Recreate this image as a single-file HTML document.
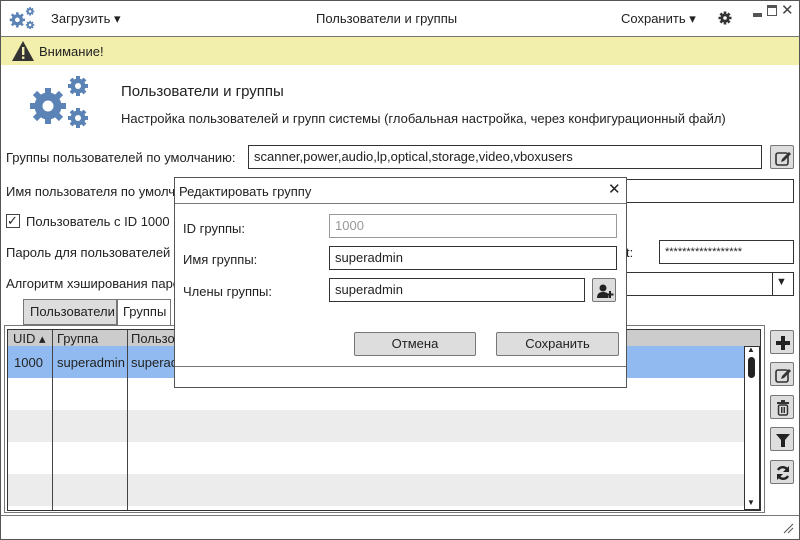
<!DOCTYPE html>
<html><head><meta charset="utf-8"><style>
*{box-sizing:border-box;margin:0;padding:0}
body{width:800px;height:540px;background:#fff;font-family:"Liberation Sans","DejaVu Sans",sans-serif;font-size:13px;color:#222;position:relative;overflow:hidden}
.a{position:absolute}
.win{left:0;top:0;width:800px;height:540px;border:1px solid #555}
.inp{position:absolute;border:1px solid #333;background:#fff;padding-left:5px;line-height:22px;font-size:13px}
.btn{position:absolute;border:1px solid #777;background:#ddd;border-radius:2px;text-align:center}
.ib{position:absolute;width:24px;height:24px;border:1px solid #777;background:#ddd;border-radius:2px}
.ib svg{position:absolute;left:3px;top:3px}
</style></head><body>
<svg width="0" height="0" style="position:absolute"><defs>
<g id="gears"><g fill="#5b83b5" stroke="#5b83b5"><circle cx="22" cy="32" r="13"/><g stroke-width="6"><path d="M22 14v36M4 32h36M9 19l26 26M35 19L9 45"/></g><circle cx="52" cy="12" r="7"/><path d="M52 2v20M42 12h20M45 5l14 14M59 5L45 19" stroke-width="4"/><circle cx="52" cy="44" r="7"/><path d="M52 34v20M42 44h20M45 37l14 14M59 37L45 51" stroke-width="4"/></g><g fill="#fff"><circle cx="22" cy="32" r="5.5"/><circle cx="52" cy="12" r="3"/><circle cx="52" cy="44" r="3"/></g></g>
<g id="edit"><rect x="2" y="4" width="12" height="12" rx="2" fill="none" stroke="#333" stroke-width="1.6"/><path d="M7 13l1-3 7-7 2 2-7 7z" fill="#333"/></g>
</defs></svg>
<div class="a win"></div>
<!-- title bar -->
<svg class="a" style="left:8px;top:6px" width="28" height="26" viewBox="0 0 66 60"><use href="#gears"/></svg>
<div class="a" style="left:51px;top:11px">Загрузить ▾</div>
<div class="a" style="left:316px;top:11px">Пользователи и группы</div>
<div class="a" style="left:621px;top:11px">Сохранить ▾</div>
<svg class="a" style="left:718px;top:11px" width="14" height="14" viewBox="0 0 14 14"><circle cx="7" cy="7" r="4.5" fill="#333"/><path d="M7 0.5v13M0.5 7h13M2.4 2.4l9.2 9.2M11.6 2.4l-9.2 9.2" stroke="#333" stroke-width="2.6"/><circle cx="7" cy="7" r="1.8" fill="#fff"/></svg>
<div class="a" style="left:753px;top:13px;width:9px;height:4px;background:#555"></div>
<div class="a" style="left:767px;top:5px;width:10px;height:11px;border:1.5px solid #555;border-top-width:3px"></div>
<div class="a" style="left:781px;top:1px;font-size:15px;color:#444">✕</div>
<div class="a" style="left:1px;top:36px;width:798px;height:1px;background:#777"></div>
<div class="a" style="left:1px;top:37px;width:798px;height:28px;background:#f2eeab"></div>
<svg class="a" style="left:11px;top:40px" width="24" height="22"><path d="M12 1 L23 21 L1 21 Z" fill="#333"/><rect x="11" y="7" width="2.4" height="8" fill="#f2eeab"/><rect x="11" y="16.5" width="2.4" height="2.4" fill="#f2eeab"/></svg>
<div class="a" style="left:39px;top:44px">Внимание!</div>
<!-- header -->
<svg class="a" style="left:26px;top:74px" width="66" height="60" viewBox="0 0 66 60"><use href="#gears"/></svg>
<div class="a" style="left:121px;top:83px;font-size:15px">Пользователи и группы</div>
<div class="a" style="left:121px;top:111px">Настройка пользователей и групп системы (глобальная настройка, через конфигурационный файл)</div>
<!-- fields -->
<div class="a" style="left:6px;top:150px">Группы пользователей по умолчанию:</div>
<div class="inp" style="left:248px;top:145px;width:514px;height:24px">scanner,power,audio,lp,optical,storage,video,vboxusers</div>
<div class="ib" style="left:770px;top:145px"><svg width="18" height="18"><use href="#edit"/></svg></div>
<div class="a" style="left:6px;top:184px">Имя пользователя по умолчанию</div>
<div class="inp" style="left:620px;top:179px;width:174px;height:24px"></div>
<div class="a" style="left:6px;top:214px;width:14px;height:14px;border:1px solid #444;font-size:13px;line-height:11px">✓</div>
<div class="a" style="left:26px;top:214px">Пользователь с ID 1000 :</div>
<div class="a" style="left:6px;top:245px">Пароль для пользователей по</div>
<div class="a" style="left:626px;top:245px">t:</div>
<div class="inp" style="left:659px;top:240px;width:135px;height:24px;font-size:11px">******************</div>
<div class="a" style="left:6px;top:276px">Алгоритм хэширования пароля</div>
<div class="inp" style="left:620px;top:272px;width:174px;height:24px"></div>
<div class="a" style="left:772px;top:273px;width:1px;height:22px;background:#333"></div>
<div class="a" style="left:776px;top:276px;font-size:11px">▼</div>
<!-- tabs -->
<div class="a" style="left:23px;top:299px;width:94px;height:26px;background:#ddd;border:1px solid #777;line-height:24px;padding-left:6px">Пользователи</div>
<div class="a" style="left:117px;top:299px;width:54px;height:27px;background:#fff;border:1px solid #777;border-bottom:none;line-height:24px;padding-left:5px">Группы</div>
<div class="a" style="left:4px;top:325px;width:761px;height:188px;border:1px solid #777"></div>
<div class="a" style="left:7px;top:329px;width:754px;height:182px;border:1px solid #333"></div>
<div class="a" style="left:8px;top:330px;width:752px;height:16px;background:#ccc"></div>
<div class="a" style="left:8px;top:346px;width:737px;height:32px;background:#91bbf0"></div>
<div class="a" style="left:8px;top:410px;width:737px;height:32px;background:#ececec"></div>
<div class="a" style="left:8px;top:474px;width:737px;height:32px;background:#ececec"></div>
<div class="a" style="left:52px;top:330px;width:1px;height:180px;background:#444"></div>
<div class="a" style="left:127px;top:330px;width:1px;height:180px;background:#444"></div>
<div class="a" style="left:13px;top:331px">UID ▴</div>
<div class="a" style="left:57px;top:331px">Группа</div>
<div class="a" style="left:131px;top:331px">Пользователи</div>
<div class="a" style="left:14px;top:355px">1000</div>
<div class="a" style="left:57px;top:355px">superadmin</div>
<div class="a" style="left:131px;top:355px">superadmin</div>
<div class="a" style="left:744px;top:346px;width:16px;height:164px;border:1px solid #333;background:#fff"></div>
<div class="a" style="left:748px;top:357px;width:7px;height:21px;background:#222;border-radius:4px"></div>
<div class="a" style="left:747px;top:345px;font-size:8px">▲</div>
<div class="a" style="left:747px;top:498px;font-size:8px">▼</div>
<div class="ib" style="left:770px;top:330px"><svg width="18" height="18"><path d="M9 2v14M2 9h14" stroke="#222" stroke-width="4"/></svg></div>
<div class="ib" style="left:770px;top:362px"><svg width="18" height="18"><use href="#edit"/></svg></div>
<div class="ib" style="left:770px;top:395px"><svg width="18" height="18"><rect x="3" y="3" width="12" height="2" fill="#333"/><rect x="7" y="1" width="4" height="2" fill="#333"/><rect x="4.5" y="6" width="9" height="10" rx="1.5" fill="none" stroke="#333" stroke-width="1.5"/><path d="M7.5 8v6M9 8v6M10.5 8v6" stroke="#333"/></svg></div>
<div class="ib" style="left:770px;top:427px"><svg width="18" height="18"><path d="M2 3h14l-5 6v7h-4v-7z" fill="#222"/></svg></div>
<div class="ib" style="left:770px;top:460px"><svg width="18" height="18"><path d="M14 7a5.5 5.5 0 0 0-10-1M4 11a5.5 5.5 0 0 0 10 1" fill="none" stroke="#222" stroke-width="2.4"/><path d="M15 2v6h-6z M3 16v-6h6z" fill="#222"/></svg></div>
<div class="a" style="left:1px;top:515px;width:798px;height:1px;background:#777"></div>
<svg class="a" style="left:782px;top:522px" width="12" height="12"><path d="M2 11L11 2M6 11L11 6" stroke="#555"/></svg>
<!-- dialog -->
<div class="a" style="left:174px;top:177px;width:453px;height:211px;background:#fff;border:1px solid #555"></div>
<div class="a" style="left:175px;top:203px;width:451px;height:1px;background:#777"></div>
<div class="a" style="left:179px;top:184px">Редактировать группу</div>
<div class="a" style="left:608px;top:180px;font-size:15px">✕</div>
<div class="a" style="left:183px;top:221px">ID группы:</div>
<div class="inp" style="left:329px;top:214px;width:288px;height:24px;border-color:#999;color:#999">1000</div>
<div class="a" style="left:183px;top:252px">Имя группы:</div>
<div class="inp" style="left:329px;top:246px;width:288px;height:24px">superadmin</div>
<div class="a" style="left:183px;top:284px">Члены группы:</div>
<div class="inp" style="left:329px;top:278px;width:256px;height:24px">superadmin</div>
<div class="ib" style="left:592px;top:278px"><svg width="18" height="18"><circle cx="7" cy="6" r="3.5" fill="#222"/><path d="M1 16c0-5 3-6 6-6s5 1 5.5 3v3z" fill="#222"/><path d="M14 9v7M10.5 12.5h7" stroke="#222" stroke-width="2"/></svg></div>
<div class="btn" style="left:354px;top:332px;width:122px;height:24px;line-height:22px">Отмена</div>
<div class="btn" style="left:496px;top:332px;width:123px;height:24px;line-height:22px">Сохранить</div>
<div class="a" style="left:175px;top:366px;width:451px;height:1px;background:#777"></div>
</body></html>
